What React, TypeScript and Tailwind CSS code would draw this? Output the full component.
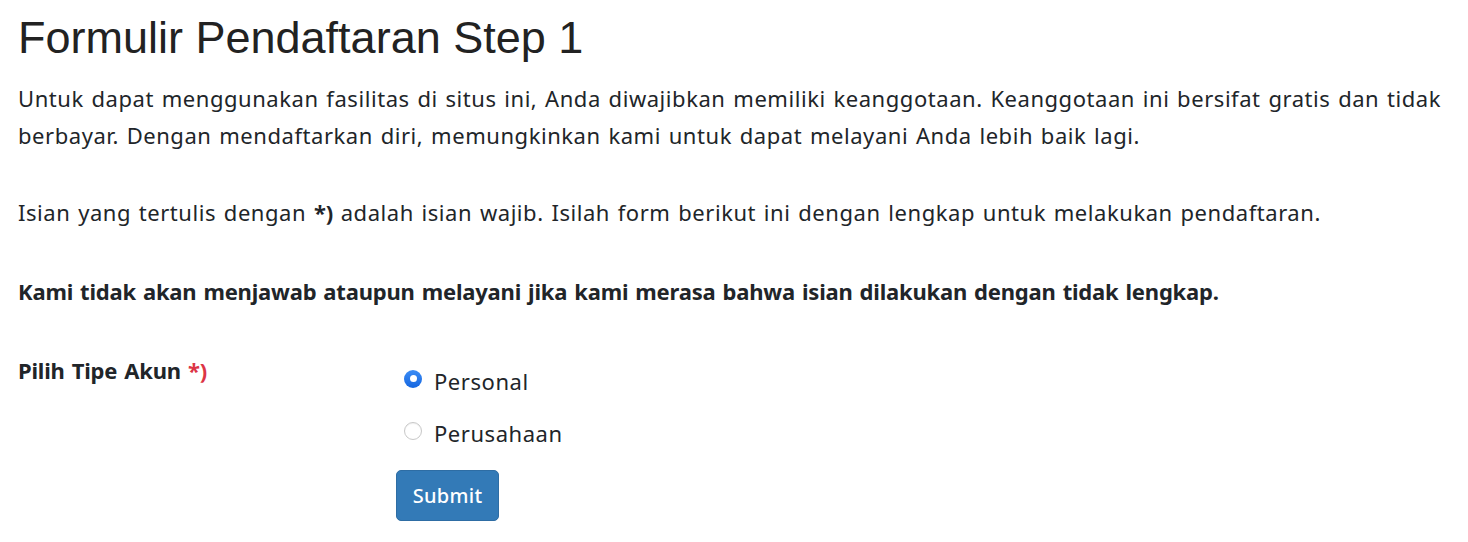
export default function App() {
  return (
    <div className="min-h-[542px] w-[1468px] bg-white text-[#212529]">
      <div className="px-[18px] pt-[10px]">
        <h1 className="font-['Liberation_Sans',Arial,sans-serif] text-[45px] leading-[56px] font-normal text-[#222]">
          Formulir Pendaftaran Step 1
        </h1>
        <div className="font-['Noto_Sans','Open_Sans',sans-serif] text-[22px] leading-[37px] tracking-[0.55px] [word-spacing:1.5px] mt-[14px]">
          <p className="whitespace-nowrap">
            Untuk dapat menggunakan fasilitas di situs ini, Anda diwajibkan memiliki keanggotaan. Keanggotaan ini bersifat gratis dan tidak
            <br />
            berbayar. Dengan mendaftarkan diri, memungkinkan kami untuk dapat melayani Anda lebih baik lagi.
          </p>
          <p className="mt-[40px]">
            Isian yang tertulis dengan <b className="tracking-[-0.2px]">*)</b> adalah isian wajib. Isilah form berikut ini dengan lengkap untuk melakukan pendaftaran.
          </p>
          <p className="mt-[42px] font-bold tracking-[-0.2px]">
            Kami tidak akan menjawab ataupun melayani jika kami merasa bahwa isian dilakukan dengan tidak lengkap.
          </p>
          <div className="mt-[42px] flex">
            <div className="w-[378px] font-bold tracking-[-0.2px]">
              Pilih Tipe Akun <span className="text-[#dc3545]">*)</span>
            </div>
            <div className="flex flex-col items-start pt-[11px]">
              <label className="flex items-center pl-[8px] h-[37px]">
                <span className="w-[18px] h-[18px] rounded-full bg-gradient-to-b from-[#3b8cf5] to-[#1466e0] flex items-center justify-center mr-[12px] -mt-[6px]">
                  <span className="w-[7px] h-[7px] rounded-full bg-white" />
                </span>
                Personal
              </label>
              <label className="flex items-center pl-[8px] h-[37px] mt-[15px]">
                <span className="w-[18px] h-[18px] rounded-full border border-[#c8c8c8] bg-white mr-[12px] -mt-[6px] shadow-[inset_0_1px_1px_rgba(0,0,0,0.06)]" />
                Perusahaan
              </label>
              <button className="mt-[18px] w-[103px] h-[51px] rounded-[5px] bg-[#337ab7] border border-[#2e6da4] text-white text-[20px] font-medium leading-[49px] tracking-[0.3px]">
                Submit
              </button>
            </div>
          </div>
        </div>
      </div>
    </div>
  );
}
